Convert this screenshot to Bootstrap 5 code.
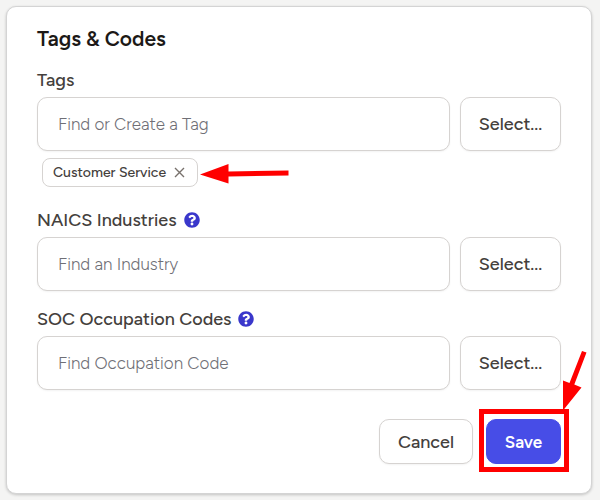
<!DOCTYPE html>
<html lang="en">
<head>
<meta charset="utf-8">
<meta name="viewport" content="width=device-width, initial-scale=1">
<title>Tags &amp; Codes</title>
<link href="https://cdn.jsdelivr.net/npm/bootstrap@5.3.0/dist/css/bootstrap.min.css" rel="stylesheet">
<style>
  body { background: #f4f4f3; color: #44403c; font-family: Figtree, Inter, "Liberation Sans", sans-serif; font-size: 18px; line-height: 24px; }
  .panel { margin: 6px 8px 6px 6px; padding: 18px 30px 29px; border: 1px solid #d4d4d4; border-radius: 10px; box-shadow: 0 1px 3px rgba(0,0,0,.2); }
  .panel-title { margin: 0 0 15px; font-size: 21px; line-height: 28px; font-weight: 600; color: #1c1917; }
  .field-label { font-weight: 500; }
  .field-input, .btn-plain, .btn-save { border-radius: 10px; line-height: 24px; }
  .field-input { height: 54px; padding: 0 20px; border-color: #d6d3d1; box-shadow: 0 1px 2px rgba(0,0,0,.05); font-size: 17px; font-weight: 300; color: #44403c; }
  .field-input::placeholder { color: #6f6f76; }
  .btn-plain { background: #fff; border-color: #d6d3d1; color: #44403c; font-size: 18px; font-weight: 500; box-shadow: 0 1px 2px rgba(0,0,0,.05); padding: 0; }
  .btn-pick { flex: 0 0 101px; }
  .btn-cancel { width: 94px; height: 45px; }
  .btn-save { width: 75px; height: 45px; padding: 0; background: #474de7; border-color: #474de7; color: #fff; font-size: 17px; font-weight: 600; }
  .field-row { gap: 10px; margin-top: 5px; }
  .tag-chip { margin: 7px 0 0 5px; height: 29px; padding: 0 12px 0 10px; border: 1px solid #d6d3d1; border-radius: 8px; font-size: 14px; font-weight: 500; width: 156px; white-space: nowrap; }
  .tag-x { line-height: 0; color: #78716c; }
  .help-icon { line-height: 0; margin-left: 7px; }
  .second-field { margin-top: 21px; }
  .third-field { margin-top: 16px; }
  .action-row { gap: 13px; margin-top: 29px; }
  .save-frame { top: -10px; left: -7px; right: -8px; bottom: -8px; border: 5px solid #f00; pointer-events: none; }
  .tag-arrow { left: 156px; top: 5px; pointer-events: none; }
  .save-arrow { right: -26px; top: -69px; pointer-events: none; }
</style>
<script src="https://cdn.jsdelivr.net/npm/bootstrap@5.3.0/dist/js/bootstrap.bundle.min.js"></script>
</head>
<body>
<svg class="d-none" xmlns="http://www.w3.org/2000/svg">
  <symbol id="help" viewBox="0 0 512 512"><path fill="#3a37cb" d="M504 256c0 137-111 248-248 248S8 393 8 256 119 8 256 8s248 111 248 248zM262.700 90c-54.500 0-89.300 23-116.500 63.800-3.500 5.300-2.400 12.400 2.700 16.300l34.700 26.300c5.200 3.900 12.600 3 16.700-2.100 17.900-22.700 30.100-35.800 57.300-35.800 20.400 0 45.700 13.100 45.700 33 0 15-12.400 22.700-32.500 34C247.100 238.500 216 254.900 216 296v4c0 6.600 5.400 12 12 12h56c6.600 0 12-5.400 12-12v-1.300c0-28.500 83.200-29.600 83.200-106.700 0-58-60.200-102-116.500-102zM256 338c-25.400 0-46 20.600-46 46s20.600 46 46 46 46-20.600 46-46-20.600-46-46-46z"/></symbol>
</svg>
<main class="panel bg-white">
  <h1 class="panel-title">Tags &amp; Codes</h1>
  <form>
    <div>
      <label class="field-label d-block" for="tags">Tags</label>
      <div class="field-row d-flex">
        <input class="form-control field-input" id="tags" type="text" placeholder="Find or Create a Tag">
        <button class="btn btn-plain btn-pick" type="button">Select...</button>
      </div>
      <div class="tag-chip position-relative d-flex align-items-center justify-content-between">
        <span>Customer Service</span>
        <button class="tag-x border-0 bg-transparent p-0" type="button" aria-label="Remove Customer Service"><svg width="11" height="11" viewBox="0 0 11 11"><path d="M1 1l9 9M10 1l-9 9" fill="none" stroke="currentColor" stroke-width="1.400"/></svg></button>
        <svg class="tag-arrow position-absolute" width="90" height="20" viewBox="0 0 90 20" aria-hidden="true"><path fill="#f00" d="M1 10.500L29.500 0v7.500L89.500 6.500v5L29.500 12.500V19.500z"/></svg>
      </div>
    </div>
    <div class="second-field">
      <div class="d-flex align-items-center">
        <label class="field-label" for="naics">NAICS Industries</label>
        <button class="help-icon border-0 bg-transparent p-0" type="button" aria-label="About NAICS industries"><svg width="16" height="16"><use href="#help"/></svg></button>
      </div>
      <div class="field-row d-flex">
        <input class="form-control field-input" id="naics" type="text" placeholder="Find an Industry">
        <button class="btn btn-plain btn-pick" type="button">Select...</button>
      </div>
    </div>
    <div class="third-field">
      <div class="d-flex align-items-center">
        <label class="field-label" for="soc">SOC Occupation Codes</label>
        <button class="help-icon border-0 bg-transparent p-0" type="button" aria-label="About SOC occupation codes"><svg width="16" height="16"><use href="#help"/></svg></button>
      </div>
      <div class="field-row d-flex">
        <input class="form-control field-input" id="soc" type="text" placeholder="Find Occupation Code">
        <button class="btn btn-plain btn-pick" type="button">Select...</button>
      </div>
    </div>
    <div class="action-row d-flex justify-content-end">
      <button class="btn btn-plain btn-cancel" type="button">Cancel</button>
      <div class="position-relative">
        <button class="btn btn-save" type="submit">Save</button>
        <div class="save-frame position-absolute"></div>
        <svg class="save-arrow position-absolute" width="25" height="61" viewBox="0 0 25 61" aria-hidden="true"><path fill="#f00" d="M1 60.500V30.500L7.500 33 20 1l4.500 1.500L12.300 34.600 19.500 37.500z"/></svg>
      </div>
    </div>
  </form>
</main>
</body>
</html>
